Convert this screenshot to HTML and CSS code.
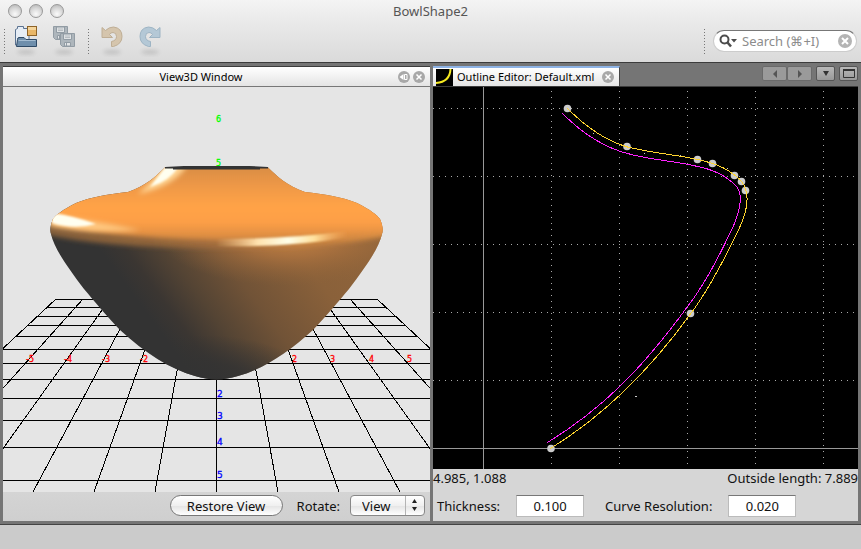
FILE: index.html
```html
<!DOCTYPE html>
<html lang="en">
<head>
<meta charset="utf-8">
<title>BowlShape2</title>
<link rel="stylesheet" href="styles.css">
</head>
<body>
<header class="chrome">
  <div class="titlebar">
    <div class="lights">
      <button class="light" aria-label="Close"></button>
      <button class="light" aria-label="Minimize"></button>
      <button class="light" aria-label="Zoom"></button>
    </div>
    <h1 class="title">BowlShape2</h1>
  </div>
  <div class="toolbar">
    <span class="grip"></span>
    <button class="tool" aria-label="Open">
      <svg width="24" height="32" viewBox="0 0 24 32">
        <ellipse class="shadow" cx="12" cy="27" rx="9" ry="2"/>
        <path d="M1.500 20V4.500L3.500 3.500V1.500H9.500V3.500H15V20Z" fill="#e6edf5" stroke="#5a7290"/>
        <rect x="13.500" y="1.500" width="9" height="9" fill="#e9b768" stroke="#8d6328"/>
        <path d="M14 2h8v3h-8z" fill="#f5d59b"/>
        <path d="M3.500 14.500Q3.500 12.500 5 12.500H10L12 14.500H22.500V21.500H2.500Z" fill="#6f8fac" stroke="#2f4a66"/>
        <path d="M4.500 15.500h17" stroke="#a5bdd2"/>
      </svg>
    </button>
    <button class="tool" aria-label="Save all">
      <svg width="24" height="32" viewBox="0 0 24 32">
        <ellipse class="shadow" cx="12" cy="27" rx="9" ry="2"/>
        <g id="disk" fill="#aeb6bc" stroke="#929ca4">
          <path d="M1.500 1.500H15.500V14.500H3.500L1.500 12.500Z"/>
          <path d="M4.500 2h8v5.500h-8z" fill="#dfe2e4"/>
          <path d="M6 4h5M6 5.500h5" stroke="#b7bdc2"/>
          <path d="M5.500 10.500h6v3.500h-6z" fill="#e3e5e7"/>
          <path d="M7.500 11v3"/>
        </g>
        <use href="#disk" x="7" y="7"/>
      </svg>
    </button>
    <span class="grip"></span>
    <button class="tool" aria-label="Undo">
      <svg width="24" height="32" viewBox="0 0 24 32">
        <ellipse class="shadow" cx="12" cy="27" rx="9" ry="2"/>
        <path d="M2 2.500L5.500 5.500Q9 2 13.500 2Q22 3 22 11.500Q22 19 13.500 21.500H11.500V16.500Q16.500 15.500 16.500 11.500Q16.500 7.500 13 7.500Q10.500 7.500 9.500 9.500L12.500 12.500H2Z" fill="#d5c5ad" stroke="#bfae95"/>
      </svg>
    </button>
    <button class="tool" aria-label="Redo">
      <svg width="24" height="32" viewBox="0 0 24 32">
        <ellipse class="shadow" cx="12" cy="27" rx="9" ry="2"/>
        <path d="M22 2.500L18.500 5.500Q15 2 10.500 2Q2 3 2 11.500Q2 19 10.500 21.500H12.500V16.500Q7.500 15.500 7.500 11.500Q7.500 7.500 11 7.500Q13.500 7.500 14.500 9.500L11.500 12.500H22Z" fill="#b4c8d6" stroke="#9db4c4"/>
      </svg>
    </button>
    <span class="spacer"></span>
    <span class="grip"></span>
    <label class="search">
      <svg width="19" height="14" viewBox="0 0 19 14"><circle cx="5.500" cy="5.500" r="4" fill="none" stroke="#4c4c4c" stroke-width="2"/><path d="M8.500 8.500L12 12.500" stroke="#4c4c4c" stroke-width="2.500"/><path d="M12 5h6l-3 3.500z" fill="#4c4c4c"/></svg>
      <input type="text" aria-label="Search" placeholder="Search (⌘+I)">
      <button class="round" aria-label="Clear search"><svg width="14" height="14" viewBox="0 0 14 14"><circle cx="7" cy="7" r="7" fill="#b4b4b4"/><path d="M4 4l6 6M10 4l-6 6" stroke="#fff" stroke-width="2"/></svg></button>
    </label>
  </div>
</header>

<main class="workspace">
  <section class="panel">
    <div class="panel-head">
      <h2 class="caption">View3D Window</h2>
      <button class="round" aria-label="Slide out"><svg width="12" height="12" viewBox="0 0 12 12"><circle cx="6" cy="6" r="6" fill="#a8a8a8"/><path d="M5.500 3v6L1.500 6z" fill="#fff"/><path d="M6.500 3.500h2.500v5h-2.500z" fill="none" stroke="#fff"/></svg></button>
      <button class="round" aria-label="Close view"><svg width="12" height="12" viewBox="0 0 12 12"><circle cx="6" cy="6" r="6" fill="#a8a8a8"/><path d="M3.500 3.500l5 5M8.500 3.500l-5 5" stroke="#fff" stroke-width="1.500"/></svg></button>
    </div>
    <svg class="view" viewBox="3 87 427 405" preserveAspectRatio="xMidYMid slice">
      <defs>
        <clipPath id="bowl"><path d="M165 167.500C156 176 146 186 128 192C110 194 90 197 76 203C62 210 56 215 53 219C50 226 50 231 51 234C54 248 66 265 84 289C95 302 105 314 120 330C145 353 170 369 195 376C203 378 209 379.500 216.500 379.500C224 379.500 230 378 238 376C263 369 288 353 313 330C328 314 338 302 349 289C367 265 379 248 382 234C383 231 383 226 380 219C377 215 371 210 357 203C343 197 323 194 305 192C287 186 277 176 268 167.500Z"/></clipPath>
        <linearGradient id="body" gradientUnits="userSpaceOnUse" x1="142" y1="307" x2="312" y2="182">
          <stop offset="0" stop-color="#333"/><stop offset=".1" stop-color="#3b3632"/><stop offset=".25" stop-color="#544434"/><stop offset=".45" stop-color="#715337"/><stop offset=".75" stop-color="#8a613a"/><stop offset="1" stop-color="#8f643b"/>
        </linearGradient>
        <radialGradient id="sheen" gradientUnits="userSpaceOnUse" cx="0" cy="0" r="1" gradientTransform="translate(290 238) scale(130 48)">
          <stop offset="0" stop-color="#c88443"/><stop offset=".4" stop-color="#b0743f" stop-opacity=".75"/><stop offset="1" stop-color="#8f6238" stop-opacity="0"/>
        </radialGradient>
        <radialGradient id="base" gradientUnits="userSpaceOnUse" cx="0" cy="0" r="1" gradientTransform="translate(205 385) scale(110 50)">
          <stop offset="0" stop-color="#333"/><stop offset=".45" stop-color="#333" stop-opacity=".8"/><stop offset="1" stop-color="#333" stop-opacity="0"/>
        </radialGradient>
        <linearGradient id="top" gradientUnits="userSpaceOnUse" x1="0" y1="167" x2="0" y2="246">
          <stop offset="0" stop-color="#d98d45"/><stop offset=".3" stop-color="#f39b46"/><stop offset=".5" stop-color="#ffa347"/><stop offset=".7" stop-color="#fd9f46"/><stop offset=".9" stop-color="#d98b42"/><stop offset="1" stop-color="#c47f40"/>
        </linearGradient>
        <linearGradient id="rim" gradientUnits="userSpaceOnUse" x1="50" y1="0" x2="383" y2="0">
          <stop offset="0" stop-color="#86603a"/><stop offset=".3" stop-color="#8f643b"/><stop offset=".5" stop-color="#a36d3c"/><stop offset=".75" stop-color="#c68241"/><stop offset="1" stop-color="#d98d43"/>
        </linearGradient>
        <linearGradient id="streak" gradientUnits="userSpaceOnUse" x1="215" y1="0" x2="348" y2="0">
          <stop offset="0" stop-color="#ffc98a" stop-opacity="0"/><stop offset=".32" stop-color="#ffe2ae"/><stop offset=".55" stop-color="#ffffe8"/><stop offset=".75" stop-color="#ffe09c"/><stop offset="1" stop-color="#ffad5c" stop-opacity="0"/>
        </linearGradient>
        <filter id="b1" x="-30%" y="-50%" width="160%" height="200%"><feGaussianBlur stdDeviation="1"/></filter>
        <filter id="b2" x="-30%" y="-50%" width="160%" height="200%"><feGaussianBlur stdDeviation="2.500"/></filter>
      </defs>
      <g class="floor">
        <path d="M56 299.500H377M47 307.500H386M38 316.500H395M28 325.500H405M16 336.500H417M2 349.500H431M0 363.500H433M0 379.500H433M0 398.500H433M0 420.500H433M0 447.500H433M0 480.500H433"/>
        <path d="M216.500 299V492M190 299L155 492M163 299L94 492M136 299L33 492M110 299L-28 492M83 299L-90 492M56 299L-151 492M243 299L278 492M270 299L339 492M297 299L400 492M323 299L461 492M350 299L523 492M377 299L584 492"/>
      </g>
      <g class="mark red"><text x="26" y="362">-5</text><text x="64" y="362">-4</text><text x="102" y="362">-3</text><text x="140" y="362">-2</text><text x="292" y="362">2</text><text x="330" y="362">3</text><text x="369" y="362">4</text><text x="407" y="362">5</text></g>
      <g class="mark blue"><text x="217" y="397">2</text><text x="217" y="419">3</text><text x="217" y="445">4</text><text x="217" y="478">5</text></g>
      <g class="mark green"><text x="216" y="122">6</text><text x="216" y="166">5</text></g>
      <g clip-path="url(#bowl)">
        <rect x="45" y="160" width="345" height="225" fill="url(#body)"/>
        <rect x="45" y="160" width="345" height="225" fill="url(#sheen)"/>
        <rect x="45" y="300" width="345" height="85" fill="url(#base)"/>
        <path d="M40 222H395V234Q340 248 216 248Q100 248 40 233Z" fill="url(#rim)" filter="url(#b2)"/>
        <path d="M40 160H395V231Q330 241 216 240Q100 238 40 220Z" fill="url(#top)" filter="url(#b2)"/>
        <path d="M160 160H274L268 169H165Z" fill="#d98d45"/>
        <path d="M217 239Q290 239 348 231V237Q290 248 217 246Z" fill="url(#streak)" filter="url(#b1)"/>
        <path d="M50 215Q90 220 140 230Q90 234 50 226Z" fill="#ffc880" filter="url(#b2)"/>
        <path d="M52 213Q74 216 96 224Q74 230 52 223Z" fill="#fffff0" filter="url(#b1)"/>
        <path d="M165 164L187 166Q174 186 138 194Q152 182 165 164Z" fill="#ffd493" filter="url(#b2)"/>
        <path d="M167 165L179 166Q170 181 150 187Z" fill="#fffff0" filter="url(#b1)"/>
      </g>
      <path d="M165 167L184 166H249L268 167V168.500H260V169.500H173V168.500H165Z" fill="#333"/>
    </svg>
    <form class="controls left">
      <button type="button" class="pill">Restore View</button>
      <label for="rotate">Rotate:</label>
      <span class="popup">
        <select id="rotate"><option>View</option></select>
        <svg class="arrows" width="20" height="20" viewBox="0 0 20 20"><path d="M.500 1v19" stroke="#b4b4b4"/><path d="M7 8L9.500 4L12 8zM7 12L9.500 16L12 12z" fill="#222"/></svg>
      </span>
    </form>
  </section>

  <section class="panel">
    <div class="tabs">
      <div class="tab">
        <svg width="17" height="17" viewBox="0 0 17 17"><path d="M0 0h17v17H0z" fill="#000"/><path d="M0 14Q14 13 14.500 0" fill="none" stroke="#f5e920" stroke-width="2"/></svg>
        <h2 class="caption">Outline Editor: Default.xml</h2>
        <button class="round" aria-label="Close tab"><svg width="12" height="12" viewBox="0 0 12 12"><circle cx="6" cy="6" r="6" fill="#a8a8a8"/><path d="M3.500 3.500l5 5M8.500 3.500l-5 5" stroke="#fff" stroke-width="1.500"/></svg></button>
      </div>
      <span class="spacer"></span>
      <div class="pair">
        <button class="mini dim" aria-label="Previous"><svg width="6" height="8" viewBox="0 0 6 8"><path d="M5 0v8L1 4z"/></svg></button>
        <button class="mini dim" aria-label="Next"><svg width="6" height="8" viewBox="0 0 6 8"><path d="M1 0v8L5 4z"/></svg></button>
      </div>
      <button class="mini" aria-label="Show list"><svg width="6" height="5" viewBox="0 0 6 5"><path d="M0 0h6L3 5z"/></svg></button>
      <button class="mini" aria-label="Maximize"><svg width="12" height="9" viewBox="0 0 12 9"><path d="M.500 1V8.500H11.500V1" fill="none" stroke="#333"/><path d="M0 0h12v2H0z"/></svg></button>
    </div>
    <svg class="view plot" viewBox="433 87 425 382" preserveAspectRatio="xMinYMin slice">
      <path class="dots" d="M433 108.500H858M433 176.500H858M433 244.500H858M433 312.500H858M433 380.500H858"/>
      <path class="dots" d="M551.500 91V469M619.500 91V469M687.500 91V469M755.500 91V469M823.500 91V469"/>
      <path class="axis" d="M483.500 87V469M433 448.500H858"/>
      <g fill="#ccc"><circle cx="567.500" cy="108.500" r="3.800"/><circle cx="627" cy="146.500" r="3.800"/><circle cx="697.500" cy="159.500" r="3.800"/><circle cx="712.500" cy="163.500" r="3.800"/><circle cx="734.500" cy="175.500" r="3.800"/><circle cx="741.500" cy="181.500" r="3.800"/><circle cx="745.500" cy="190.500" r="3.800"/><circle cx="690.500" cy="313.500" r="3.800"/><circle cx="551" cy="448.500" r="3.800"/><path d="M635 396h2v1h-2zM593 133h1v1h-1zM644 153h1v1h-1zM755 214h1v1h-1zM680 155h1v1h-1zM727 168h1v1h-1z"/></g>
      <path class="curve outer" d="M567.500 108.500C582 123 603 140 627.500 147C652 153 678 155 697.500 159.500Q705 161 712.500 163.500Q724 167 734.500 175Q739 178 742 182Q745 186 746 190.500C750 206 742 223 738 231C723 262 707 292 690.500 314C650 370 605 415 550.500 448.500"/>
      <path class="curve inner" d="M562.500 113.500C580 131 604 148 629.500 154C650 160 676 161 695.500 166Q722 171 736 186C745 195 738 217 731 231C717 261 703 287 686.500 308C644 366 604 408 547.500 442.500"/>
    </svg>
    <div class="readout"><output>4.985, 1.088</output><output>Outside length: 7.889</output></div>
    <form class="controls right">
      <label for="thick">Thickness:</label><input id="thick" class="num" type="text" value="0.100">
      <label for="res">Curve Resolution:</label><input id="res" class="num" type="text" value="0.020">
    </form>
  </section>
</main>
<footer class="status"></footer>
</body>
</html>
```
FILE: styles.css
```css
* { box-sizing: border-box; }
body {
  margin: 0;
  height: 100vh;
  display: flex;
  flex-direction: column;
  background: #757575;
  color: #111;
  font: 13px/16px "Noto Sans", "Open Sans", sans-serif;
  overflow: hidden;
}
button, input, select { font: inherit; color: inherit; margin: 0; }
button { padding: 0; border: 0; background: none; }
svg { display: block; }
.chrome {
  background: linear-gradient(#f4f4f4, #ebebeb 30%, #dadada);
  border-bottom: 1px solid #3c3c3c;
}
.titlebar {
  height: 22px;
  display: grid;
  grid-template-columns: 1fr auto 1fr;
  align-items: center;
}
.lights { display: flex; gap: 7px; padding-left: 8px; }
.light {
  width: 14px;
  height: 14px;
  border-radius: 50%;
  border: 1px solid #999;
  background: radial-gradient(circle at 50% 75%, #fafafa, #dadada 50%, #b0b0b0);
}
.title { margin: 0; font-size: 13px; font-weight: 400; color: #555; }
.toolbar {
  height: 40px;
  display: flex;
  align-items: flex-start;
  padding: 3px 4px 0;
}
.grip {
  width: 1px;
  height: 26px;
  margin-top: 4px;
  background: repeating-linear-gradient(#777 0 1px, transparent 1px 3px);
}
.tool { width: 24px; margin-left: 9px; }
.tool + .tool { margin-left: 14px; }
.tool + .grip { margin-left: 12px; }
.grip + .tool + .tool + .grip + .tool { margin-left: 11px; }
.shadow { fill: #000; opacity: .14; filter: blur(2px); }
.spacer { flex: 1; }
.search {
  display: flex;
  align-items: center;
  gap: 4px;
  width: 144px;
  height: 22px;
  margin: 5px 0 0 8px;
  padding: 0 4px 0 5px;
  background: #fff;
  border: 1px solid #ccc;
  border-top-color: #777;
  border-radius: 11px;
}
.search input { flex: 1; min-width: 0; padding: 0; border: 0; background: none; outline: 0; }
.search input::placeholder { color: #8c8c8c; opacity: 1; }
.workspace {
  flex: 1;
  min-height: 0;
  display: grid;
  grid-template-columns: 427fr 425fr;
  gap: 3px;
  padding: 3px;
}
.panel { display: flex; flex-direction: column; min-width: 0; min-height: 0; background: #d6d6d6; }
.panel-head {
  height: 21px;
  display: flex;
  align-items: center;
  gap: 3px;
  padding-right: 5px;
  background: linear-gradient(#fff, #e4e4e4);
  border-top: 1px solid #3c3c3c;
  border-bottom: 1px solid #777;
}
.caption { margin: 0; font-size: 11px; line-height: 16px; font-weight: 400; color: #000; }
.panel-head .caption { flex: 1; padding-left: 4px; text-align: center; }
.view { flex: 1; min-height: 0; width: 100%; background: #e5e5e5; }
.floor path { fill: none; stroke: #000; stroke-width: 1; shape-rendering: crispEdges; }
.mark { font: 8px "DejaVu Sans", sans-serif; stroke-width: .3; }
.red { fill: #f00; stroke: #f00; }
.blue { fill: #00f; stroke: #00f; font-size: 9px; }
.green { fill: #0f0; stroke: #0f0; }
.controls { display: flex; align-items: center; background: linear-gradient(#d4d4d4, #cfcfcf); }
.left { height: 29px; padding: 0 5px 2px 0; justify-content: flex-end; }
.pill {
  width: 113px;
  height: 21px;
  margin-right: 14px;
  border: 1px solid #777;
  border-radius: 11px;
  background: linear-gradient(#fff, #f0f0f0 50%, #e6e6e6 55%, #fff);
}
.popup { position: relative; margin-left: 10px; }
.popup select {
  appearance: none;
  display: block;
  width: 75px;
  height: 21px;
  padding: 0 0 0 11px;
  border: 1px solid #888;
  border-radius: 4px;
  background: linear-gradient(#fff, #f0f0f0 50%, #e6e6e6 55%, #fff);
}
.arrows { position: absolute; top: 0; right: 0; pointer-events: none; }
.tabs {
  height: 21px;
  display: flex;
  background: #757575;
  border-bottom: 1px solid #3c3c3c;
}
.tab {
  height: 20px;
  display: flex;
  align-items: center;
  gap: 4px;
  padding: 0 5px 0 3px;
  background: linear-gradient(#fff, #e4e4e4);
  border-top: 2px solid #8fb4e6;
  border-right: 1px solid #444;
}
.tab .round { margin-left: 4px; }
.pair { display: flex; margin-right: 4px; }
.mini {
  width: 19px;
  height: 15px;
  margin-right: 4px;
  display: flex;
  align-items: center;
  justify-content: center;
  border: 1px solid #555;
  border-radius: 2px;
  background: linear-gradient(#b8b8b8, #999);
  fill: #333;
}
.mini:last-child { margin-right: 0; }
.pair .dim { width: 25px; margin: 0; border-color: #6a6a6a; background: #9a9a9a; fill: #555; }
.plot { background: #000; }
.plot path { shape-rendering: crispEdges; }
.dots { stroke: #aaa; stroke-dasharray: 1 5; }
.axis { stroke: #999; }
.curve { fill: none; stroke-width: 1; }
.outer { stroke: #ffd52e; }
.inner { stroke: #f2f; }
.readout { height: 17px; display: flex; justify-content: space-between; align-items: center; }
.right { height: 35px; padding: 5px 4px 0; background: none; }
.num {
  width: 68px;
  height: 22px;
  margin: 0 21px 0 16px;
  padding: 0;
  text-align: center;
  background: #fff;
  border: 1px solid #bbb;
  border-top-color: #777;
}
.status { height: 25px; background: #cbcbcb; border-top: 1px solid #444; }
```
